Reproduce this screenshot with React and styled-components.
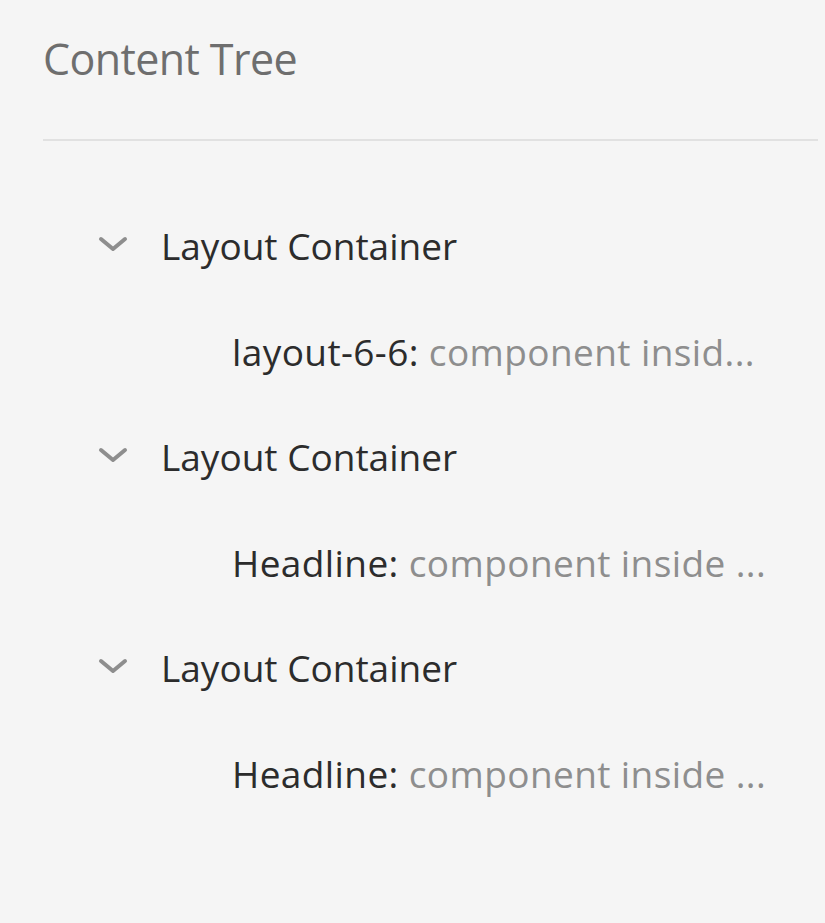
import React from "react"
import styled, { createGlobalStyle } from "styled-components"

const Global = createGlobalStyle`
  html, body {
    margin: 0;
    padding: 0;
    background: #f5f5f5;
  }
  body {
    font-family: "Open Sans", "Noto Sans", sans-serif;
  }
`

const Panel = styled.div`
  width: 825px;
  height: 923px;
  box-sizing: border-box;
  padding: 0 7px 0 43px;
  background: #f5f5f5;
`

const Title = styled.h2`
  margin: 0;
  height: 141px;
  display: flex;
  align-items: center;
  padding-bottom: 22px;
  box-sizing: border-box;
  font-size: 43px;
  font-weight: 400;
  letter-spacing: -0.6px;
  color: #6e6e6e;
  border-bottom: 2px solid #e1e1e1;
`

const Tree = styled.ul`
  list-style: none;
  margin: 0;
  padding: 52px 0 0 0;
`

const Row = styled.li`
  height: 105.5px;
  display: flex;
  align-items: center;
  padding-left: ${p => (p.$child ? 189 : 57)}px;
  font-size: 37px;
  color: #2c2c2c;
  white-space: nowrap;
  letter-spacing: ${p => (p.$child ? 0.4 : 0)}px;
`

const Toggle = styled.span`
  width: 63px;
  display: flex;
  align-items: center;
  margin-top: -4px;
  margin-left: -2px;
  svg { display: block; }
`

const Desc = styled.span`
  color: #8e8e8e;
`

function Chevron() {
  return (
    <svg width="30" height="16" viewBox="0 0 30 16">
      <path d="M3 3 L15 13 L27 3" fill="none" stroke="#8e8e8e" strokeWidth="4" strokeLinecap="round" strokeLinejoin="round" />
    </svg>
  )
}

const items = [
  { name: "layout-6-6", desc: "component insid..." },
  { name: "Headline", desc: "component inside ..." },
  { name: "Headline", desc: "component inside ..." },
]

export default function App() {
  return (
    <>
      <Global />
      <Panel>
        <Title>Content Tree</Title>
        <Tree>
          {items.map((it, i) => (
            <React.Fragment key={i}>
              <Row>
                <Toggle><Chevron /></Toggle>
                Layout Container
              </Row>
              <Row $child>
                {it.name}:&nbsp;<Desc>{it.desc}</Desc>
              </Row>
            </React.Fragment>
          ))}
        </Tree>
      </Panel>
    </>
  )
}
